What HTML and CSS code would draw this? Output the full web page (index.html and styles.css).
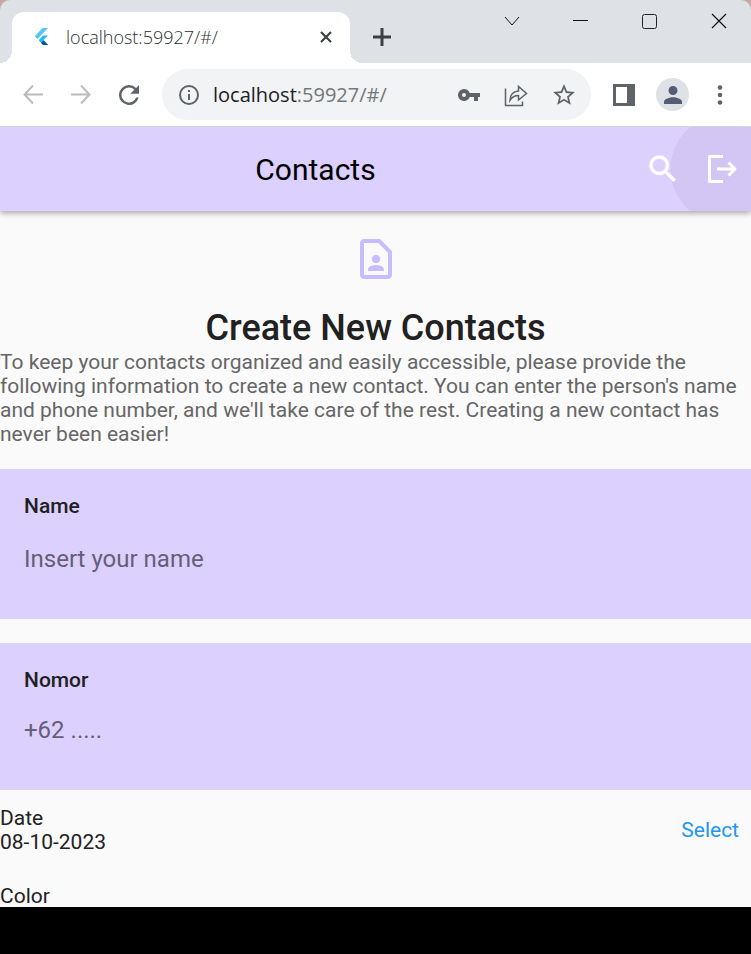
FILE: index.html
```html
<!DOCTYPE html>
<html lang="en">
<head>
<meta charset="utf-8">
<meta name="viewport" content="width=device-width, initial-scale=1">
<title>localhost:59927/#/</title>
<link rel="stylesheet" href="styles.css">
</head>
<body>
<div class="backdrop">
  <header class="tabstrip">
    <div class="tab">
      <svg class="favicon" viewBox="0 0 20 20" width="20" height="20" aria-hidden="true"><path d="M10.500 1H16L5.500 12 2.800 9.300z" fill="#54c5f8"/><path d="M11 8.500H16l-4.500 4.500L16 18h-5L6.800 13.200z" fill="#29b6f6"/><path d="M9 15.700l2.800-2.200L16 18h-5z" fill="#01579b"/></svg>
      <span class="tab-title">localhost:59927/#/</span>
      <button class="bare" aria-label="Close tab"><svg viewBox="0 0 14 14" width="14" height="14"><path d="M2 2l10 10M12 2L2 12" stroke="#3c4043" stroke-width="2.200"/></svg></button>
    </div>
    <button class="bare new-tab" aria-label="New tab"><svg viewBox="0 0 20 20" width="20" height="20"><path d="M10 1v18M1 10h18" stroke="#3c4043" stroke-width="3"/></svg></button>
    <div class="window-controls">
      <button class="bare" aria-label="Search tabs"><svg viewBox="0 0 16 16" width="16" height="16"><path d="M1 4l7 8 7-8" fill="none" stroke="#111"/></svg></button>
      <button class="bare" aria-label="Minimize"><svg viewBox="0 0 16 16" width="16" height="16"><path d="M0 7.500h15" stroke="#111"/></svg></button>
      <button class="bare" aria-label="Maximize"><svg viewBox="0 0 16 16" width="16" height="16"><rect x=".500" y="1.500" width="14" height="14" rx="2" fill="none" stroke="#222"/></svg></button>
      <button class="bare" aria-label="Close"><svg viewBox="0 0 16 16" width="16" height="16"><path d="M1 1l14 14M15 1L1 15" stroke="#111" stroke-width="1.200"/></svg></button>
    </div>
  </header>
  <nav class="toolbar" aria-label="Browser">
    <button class="bare" aria-label="Back"><svg viewBox="0 0 20 20" width="20" height="20"><path d="M20 9.500H2M10 .500L1.500 9.500l8.500 9" fill="none" stroke="#babcbe" stroke-width="2"/></svg></button>
    <button class="bare" aria-label="Forward"><svg viewBox="0 0 20 20" width="20" height="20"><path d="M0 9.500h18M10 .500l8.500 9-8.500 9" fill="none" stroke="#babcbe" stroke-width="2"/></svg></button>
    <button class="bare" aria-label="Reload"><svg viewBox="4 4 16 16" width="20" height="20"><path d="M17.650 6.350A7.960 7.960 0 0 0 12 4a8 8 0 1 0 7.730 10h-2.080A6 6 0 1 1 12 6c1.660 0 3.140.69 4.220 1.780L13 11h7V4z" fill="#5f6368"/></svg></button>
    <div class="address">
      <svg viewBox="0 0 22 22" width="22" height="22" aria-hidden="true"><circle cx="11" cy="11" r="9" fill="none" stroke="#5f6368" stroke-width="2"/><path d="M10 6h2v2h-2zM10 10h2v6h-2z" fill="#5f6368"/></svg>
      <span class="url">localhost<span class="url-rest">:59927/#/</span></span>
      <button class="bare" aria-label="Passwords"><svg viewBox="1 6 22 12" width="22" height="12"><path d="M12.650 10A6 6 0 0 0 7 6a6 6 0 1 0 5.650 8H17v4h4v-4h2v-4zM7 14a2 2 0 1 1 0-4 2 2 0 0 1 0 4z" fill="#5f6368"/></svg></button>
      <button class="bare" aria-label="Share"><svg viewBox="0 0 24 24" width="24" height="24"><path d="M1.500 5.500v17h17v-4M6 17.500c0-5.500 3-9 8.500-9.500V3.500l8 7-8 6.500v-4.500c-4 0-6.500 1.500-8.500 5z" fill="none" stroke="#5f6368" stroke-width="1.500"/></svg></button>
      <button class="bare" aria-label="Bookmark"><svg viewBox="1 1 22 22" width="24" height="24"><path d="M22 9.240l-7.190-.62L12 2 9.190 8.630 2 9.240l5.460 4.730L5.820 21 12 17.270 18.180 21l-1.630-7.030zM12 15.400l-3.760 2.270 1-4.280-3.320-2.880 4.380-.38L12 6.100l1.710 4.040 4.380.38-3.320 2.880 1 4.280z" fill="#5f6368"/></svg></button>
    </div>
    <button class="bare" aria-label="Side panel"><svg viewBox="0 0 22 22" width="22" height="22"><path d="M0 0h22v22H0zM3 3v16h11V3z" fill="#5f6368" fill-rule="evenodd"/></svg></button>
    <button class="bare avatar" aria-label="Profile"><svg viewBox="4 4 16 16" width="18" height="18"><path d="M12 12a4 4 0 1 0 0-8 4 4 0 0 0 0 8zm0 2c-2.670 0-8 1.340-8 4v2h16v-2c0-2.660-5.330-4-8-4z" fill="#535d74"/></svg></button>
    <button class="bare" aria-label="Menu"><svg viewBox="0 0 6 20" width="6" height="20"><g fill="#5f6368"><circle cx="3" cy="2.500" r="2.300"/><circle cx="3" cy="10" r="2.300"/><circle cx="3" cy="17.500" r="2.300"/></g></svg></button>
  </nav>
</div>
<div class="appbar">
  <h1 class="appbar-title">Contacts</h1>
  <button class="bare action" aria-label="Search"><svg viewBox="0 0 24 24" width="36" height="36"><path d="M15.500 14h-.79l-.28-.27A6.470 6.470 0 0 0 16 9.500 6.500 6.500 0 1 0 9.500 16c1.610 0 3.090-.59 4.230-1.570l.27.28v.79l5 4.990L20.490 19zm-6 0a4.500 4.500 0 1 1 0-9 4.500 4.500 0 0 1 0 9z" fill="#fff" stroke="#fff" stroke-width=".3"/></svg></button>
  <button class="bare action" aria-label="Log out"><svg viewBox="0 0 36 36" width="36" height="36"><path d="M18 5.500H4.500v25H18M12 18h18M23.500 11.500l6.500 6.500-6.500 6.500" fill="none" stroke="#fff" stroke-width="3" stroke-linejoin="round"/></svg></button>
</div>
<main class="content">
  <svg class="hero" viewBox="0 0 24 24" width="48" height="48" aria-hidden="true"><path d="M14 2H6C4.900 2 4 2.900 4 4v16c0 1.100.9 2 2 2h12c1.100 0 2-.9 2-2V8zM6 20V4h7.170L18 8.830V20z" fill="#c9bcfb" fill-rule="evenodd"/><circle cx="12" cy="12" r="2" fill="#c9bcfb"/><path d="M8 18v-.57c0-.81.480-1.530 1.220-1.850a6.950 6.950 0 0 1 5.560 0A2.010 2.010 0 0 1 16 17.430V18z" fill="#c9bcfb"/></svg>
  <h2 class="heading">Create New Contacts</h2>
  <p class="intro">To keep your contacts organized and easily accessible, please provide the following information to create a new contact. You can enter the person's name and phone number, and we'll take care of the rest. Creating a new contact has never been easier!</p>
  <form class="form">
    <div class="field">
      <label for="name">Name</label>
      <input id="name" type="text" placeholder="Insert your name">
    </div>
    <div class="field field-phone">
      <label for="nomor">Nomor</label>
      <input id="nomor" type="tel" placeholder="+62 .....">
    </div>
    <div class="date-row">
      <div>Date<br>08-10-2023</div>
      <button type="button" class="bare select">Select</button>
    </div>
    <div class="color">Color</div>
  </form>
</main>
<footer class="bottom"></footer>
</body>
</html>
```
FILE: styles.css
```css
* { box-sizing: border-box; }
body {
  margin: 0;
  height: 100vh;
  display: flex;
  flex-direction: column;
  overflow: hidden;
  background: #fafafa;
  color: #212121;
  font: 21px/24px Roboto, sans-serif;
}
svg { display: block; flex: none; }
.bare {
  display: flex;
  align-items: center;
  justify-content: center;
  flex: none;
  padding: 0;
  border: 0;
  background: none;
  font: inherit;
}
.backdrop { flex: none; background: #c5a8a4; }
.tabstrip {
  display: flex;
  height: 63px;
  padding: 12px 24px 0 12px;
  background: #dee1e6;
  border-radius: 10px 10px 0 0;
}
.tab {
  position: relative;
  display: flex;
  align-items: center;
  flex: 0 1 338px;
  padding: 0 17px 2px 20px;
  background: #fff;
  border-radius: 12px 12px 0 0;
}
.tab::before,
.tab::after {
  content: "";
  position: absolute;
  bottom: 0;
  width: 12px;
  height: 12px;
}
.tab::before { right: 100%; background: radial-gradient(circle at 0 0, transparent 12px, #fff 12px); }
.tab::after { left: 100%; background: radial-gradient(circle at 100% 0, transparent 12px, #fff 12px); }
.tab-title {
  flex: 1;
  margin-left: 14px;
  color: #2c2f33;
  font: 300 18px/24px "Open Sans", sans-serif;
}
.new-tab { margin-left: 22px; padding-bottom: 2px; }
.window-controls {
  display: flex;
  align-items: flex-start;
  gap: 53px;
  margin-left: auto;
  padding-top: 1px;
}
.toolbar {
  display: flex;
  align-items: center;
  gap: 28px;
  height: 64px;
  padding: 0 28px 0 23px;
  background: #fff;
  border-bottom: 1px solid #d5d5db;
}
.address {
  display: flex;
  align-items: center;
  gap: 24px;
  flex: 1;
  height: 51px;
  margin: 0 -6px 0 -5px;
  padding: 0 15px 0 16px;
  border-radius: 26px;
  background: #f1f3f4;
}
.url {
  flex: 1;
  margin-left: -11px;
  color: #202124;
  font: 20px/24px "Open Sans", sans-serif;
}
.url-rest { color: #74777b; }
.avatar {
  width: 33px;
  height: 33px;
  margin: 0 0 0 -7px;
  border-radius: 50%;
  background: #dee1e6;
}
.appbar {
  position: relative;
  display: flex;
  flex: none;
  align-items: center;
  height: 84px;
  background: #dcd0ff;
  box-shadow: 0 2px 6px rgba(0, 0, 0, .35);
  clip-path: inset(0 0 -12px 0);
}
.appbar::after {
  content: "";
  position: absolute;
  inset: 0;
  background: radial-gradient(circle at calc(100% - 26px) 50%, rgba(80, 60, 90, .07) 54px, transparent 55px);
  pointer-events: none;
}
.appbar-title {
  flex: 1;
  margin: 0;
  padding-top: 2px;
  color: #000;
  font-size: 30px;
  line-height: 36px;
  font-weight: 400;
  text-align: center;
}
.action {
  position: relative;
  z-index: 1;
  width: 60px;
  height: 84px;
  padding-left: 4px;
}
.content {
  display: flex;
  flex: 1;
  flex-direction: column;
  min-height: 0;
  padding-top: 24px;
  overflow: hidden;
}
.hero { align-self: center; }
.heading {
  margin: 24px 0 0;
  font-size: 36px;
  line-height: 43px;
  font-weight: 500;
  text-align: center;
}
.intro { margin: 0 0 23px; color: #666; }
.field {
  height: 150px;
  margin-bottom: 24px;
  padding: 25px 24px 0;
  background: #dcd0ff;
}
.field label { display: block; font-weight: 500; }
.field input {
  display: block;
  width: 100%;
  height: 36px;
  margin-top: 23px;
  padding: 0;
  border: 0;
  outline: 0;
  background: none;
  color: #212121;
  font: 24px/30px Roboto, sans-serif;
}
.field input::placeholder { color: #655f75; opacity: 1; }
.field-phone { height: 147px; margin-bottom: 16px; }
.field-phone input { margin-top: 20px; }
.date-row {
  display: flex;
  align-items: center;
  justify-content: space-between;
  padding-right: 12px;
}
.select { color: #2196f3; }
.color { margin-top: 30px; }
.bottom { flex: none; height: 47px; background: #000; }
```
